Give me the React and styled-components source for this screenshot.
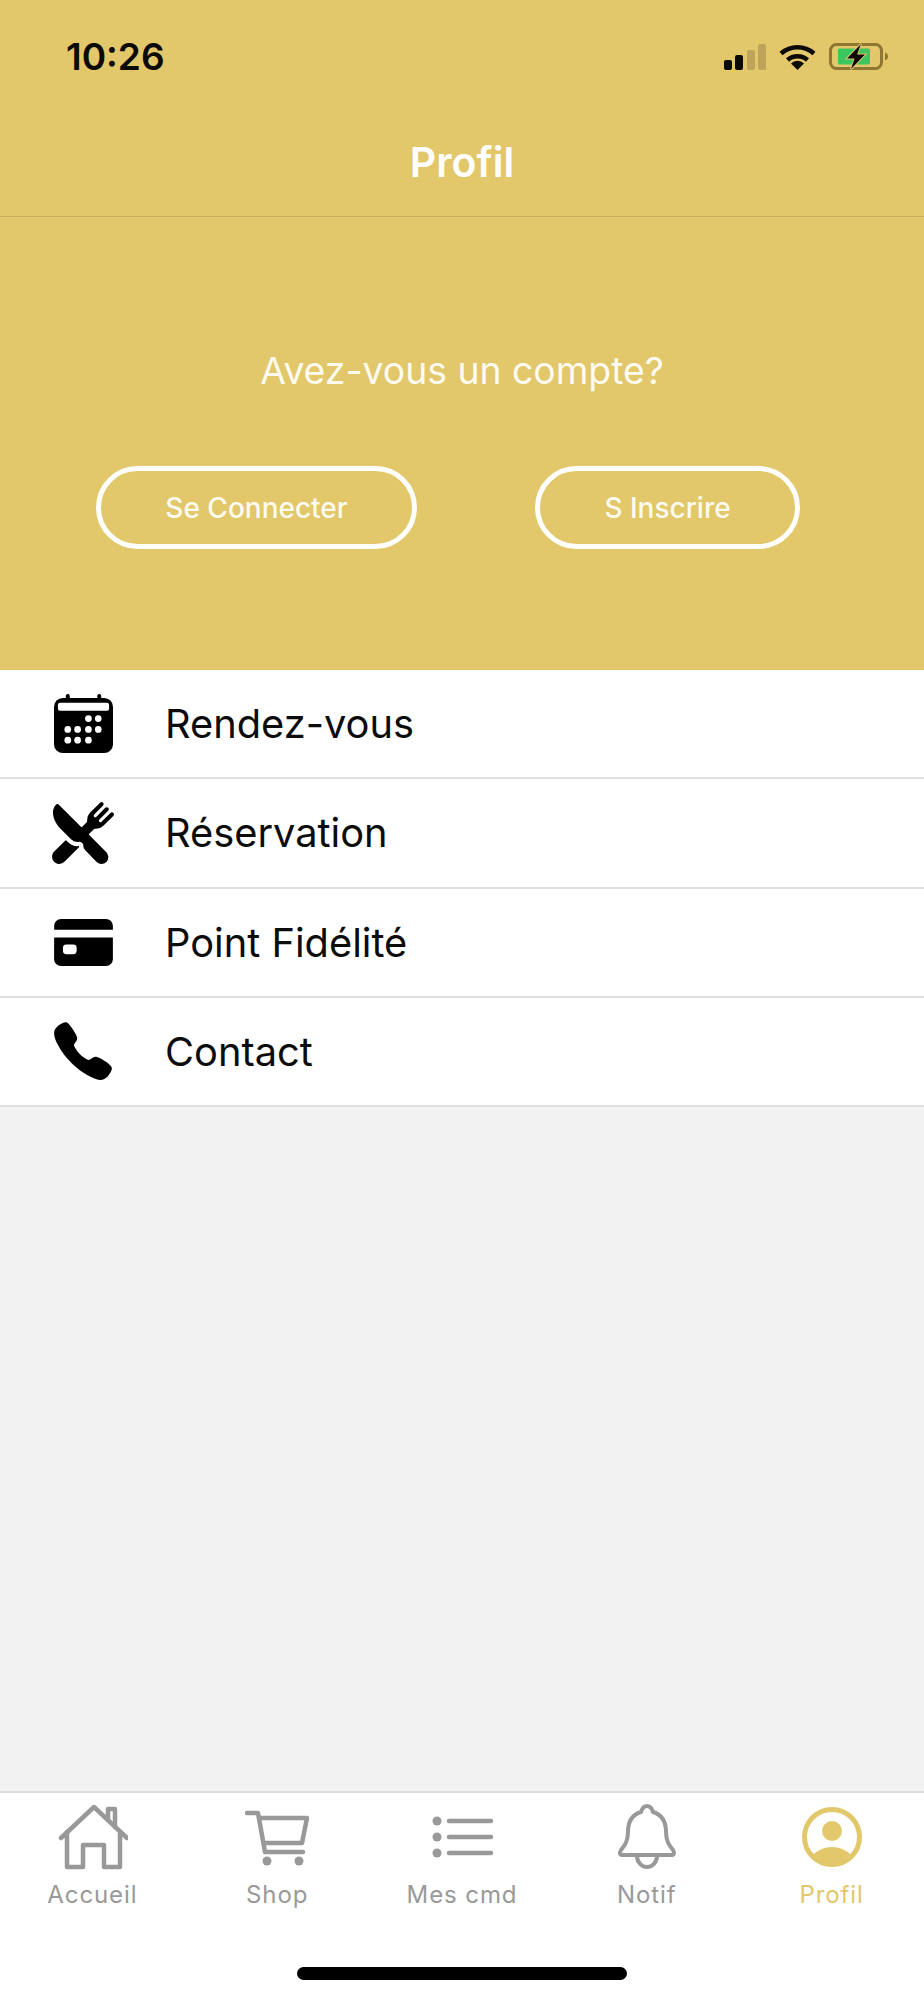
import { createGlobalStyle, styled } from "styled-components";
import { IoCall, IoRestaurant } from "react-icons/io5";

const GOLD = "#e2c76b";

const GlobalStyle = createGlobalStyle`
  html, body {
    margin: 0;
    padding: 0;
    background: #f2f2f2;
    font-family: Inter, "Liberation Sans", sans-serif;
  }
`;

const Page = styled.div`
  width: 924px;
  height: 2000px;
  display: flex;
  flex-direction: column;
  overflow: hidden;
`;

const Header = styled.header`
  background: ${GOLD};
  border-bottom: 1px solid #c6ab5c;
`;

const StatusBar = styled.div`
  height: 90px;
  padding: 23px 35px 0 66px;
  box-sizing: border-box;
  display: flex;
  align-items: center;
  justify-content: space-between;
`;

const Time = styled.span`
  font-size: 37px;
  font-weight: 600;
  color: #0b0a06;
`;

const StatusIcons = styled.div`
  display: flex;
  align-items: center;
  gap: 13px;
`;

const Title = styled.h1`
  margin: 0;
  height: 126px;
  padding-top: 20px;
  box-sizing: border-box;
  line-height: 104px;
  text-align: center;
  font-size: 41px;
  font-weight: 600;
  color: #fff;
`;

const Hero = styled.section`
  background: ${GOLD};
  height: 453px;
  padding-top: 131px;
  box-sizing: border-box;
`;

const Question = styled.p`
  margin: 0 0 72px;
  line-height: 46px;
  text-align: center;
  font-size: 37.3px;
  font-weight: 400;
  color: #fdfbf0;
`;

const Buttons = styled.div`
  display: flex;
  gap: 118px;
  padding-left: 96px;
`;

const OutlineButton = styled.button`
  width: ${(props) => props.$width}px;
  height: 83px;
  border: 5px solid #fff;
  border-radius: 42px;
  background: transparent;
  font-family: inherit;
  font-size: 28px;
  font-weight: 500;
  color: #fdfbf0;
  padding: 0;
`;

const Menu = styled.ul`
  margin: 0;
  padding: 0;
  list-style: none;
  background: #fff;
`;

const MenuRow = styled.li`
  height: 109.25px;
  box-sizing: border-box;
  border-bottom: 2px solid #dfdfdf;
  display: flex;
  align-items: center;
  padding-left: 50px;
`;

const MenuIcon = styled.span`
  width: 66px;
  height: 66px;
  margin-right: 49px;
  display: flex;
  align-items: center;
  justify-content: center;
  color: #000;
`;

const MenuLabel = styled.span`
  font-size: 39.8px;
  color: #0c0c0c;
`;

const Filler = styled.main`
  flex: 1;
  background: #f2f2f2;
`;

const TabBar = styled.footer`
  height: 209px;
  box-sizing: border-box;
  background: #fff;
  border-top: 2px solid #dcdcdc;
  display: flex;
  flex-direction: column;
`;

const Tabs = styled.nav`
  display: grid;
  grid-template-columns: repeat(5, 1fr);
  padding-top: 9px;
`;

const Tab = styled.div`
  display: flex;
  flex-direction: column;
  align-items: center;
  color: ${(props) => (props.$active ? GOLD : "#999")};
`;

const TabIcon = styled.div`
  height: 70px;
  display: flex;
  align-items: center;
  justify-content: center;
`;

const TabLabel = styled.span`
  margin-top: 8px;
  font-size: 24px;
  line-height: 30px;
  letter-spacing: 0.9px;
  font-weight: 400;
`;

const HomeBar = styled.div`
  width: 330px;
  height: 13px;
  margin: auto auto 20px;
  border-radius: 7px;
  background: #000;
`;

function Signal() {
  return (
    <svg width="42" height="26" viewBox="0 0 42 26">
      <rect x="0" y="16" width="8" height="10" rx="2" fill="#0b0a06" />
      <rect x="11" y="11" width="8" height="15" rx="2" fill="#0b0a06" />
      <rect x="23" y="6" width="8" height="20" rx="2" fill="#bda45a" />
      <rect x="34" y="0" width="8" height="26" rx="2" fill="#bda45a" />
    </svg>
  );
}

function Wifi() {
  return (
    <svg width="37" height="26" viewBox="0 0 37 26" fill="none" stroke="#0b0a06">
      <path d="M2 9.5A25 25 0 0 1 35 9.5" strokeWidth="4.5" />
      <path d="M8.5 16A15 15 0 0 1 28.5 16" strokeWidth="4.5" />
      <path d="M18.5 26L12 19.5A9 9 0 0 1 25 19.5Z" fill="#0b0a06" stroke="none" />
    </svg>
  );
}

function Battery() {
  return (
    <svg width="60" height="27" viewBox="0 0 60 27" fill="none">
      <rect x="1.5" y="1.5" width="51" height="24" rx="6" stroke="#8d7733" strokeWidth="3" />
      <path d="M56 9.5c2 .8 3 2.2 3 4s-1 3.2-3 4z" fill="#8d7733" />
      <rect x="9" y="5.5" width="32" height="16" rx="1.5" fill="#3cc65f" />
      <path d="M32 1L18 15.5H25.5L22 26L36 11.5H28Z" fill="#0b0a06" stroke={GOLD} strokeWidth="2" paintOrder="stroke" />
    </svg>
  );
}

function CalendarIcon() {
  const dots = [
    [35, 25], [45, 25],
    [14, 36], [24, 36], [35, 36], [45, 36],
    [14, 47], [24, 47], [35, 47],
  ];
  return (
    <svg width="59" height="59" viewBox="0 0 60 60">
      <rect x="12" y="0" width="4" height="8" rx="2" fill="#000" />
      <rect x="44" y="0" width="4" height="8" rx="2" fill="#000" />
      <rect x="0" y="4" width="60" height="56" rx="9" fill="#000" />
      <rect x="4" y="9" width="52" height="8" rx="2" fill="#fff" />
      {dots.map(([cx, cy]) => (
        <circle key={`${cx}-${cy}`} cx={cx} cy={cy} r="3.4" fill="#fff" />
      ))}
    </svg>
  );
}

function CardIcon() {
  return (
    <svg width="59" height="47" viewBox="0 0 60 48">
      <path d="M0 11V7a7 7 0 0 1 7-7h46a7 7 0 0 1 7 7v4z" fill="#000" />
      <path d="M0 19h60v22a7 7 0 0 1-7 7H7a7 7 0 0 1-7-7z" fill="#000" />
      <rect x="9" y="26" width="14" height="10" rx="3.5" fill="#fff" />
    </svg>
  );
}

function HomeIcon() {
  return (
    <svg width="72" height="66" viewBox="-2 0 72 66" fill="none" stroke="currentColor" strokeWidth="4.5" strokeLinecap="round" strokeLinejoin="round">
      <path d="M3 34L36 3L69 34" />
      <path d="M50 16V5H57V23" />
      <path d="M9 28V63H25V41H46V63H62V28" />
    </svg>
  );
}

function CartIcon() {
  return (
    <svg width="64" height="60" viewBox="0 0 64 60" fill="none" stroke="currentColor" strokeWidth="4.5" strokeLinecap="round" strokeLinejoin="round">
      <path d="M2 6H13L20 45H58" />
      <path d="M15 11H62L57 36H20" />
      <circle cx="22" cy="54" r="4.5" fill="currentColor" stroke="none" />
      <circle cx="54" cy="54" r="4.5" fill="currentColor" stroke="none" />
    </svg>
  );
}

function ListIcon() {
  return (
    <svg width="64" height="50" viewBox="0 0 64 50" fill="none" stroke="currentColor" strokeWidth="4.5" strokeLinecap="round">
      <circle cx="7" cy="9" r="4.5" fill="currentColor" stroke="none" />
      <circle cx="7" cy="25" r="4.5" fill="currentColor" stroke="none" />
      <circle cx="7" cy="41" r="4.5" fill="currentColor" stroke="none" />
      <path d="M19 9H61M19 25H61M19 41H61" />
    </svg>
  );
}

function BellIcon() {
  return (
    <svg width="60" height="68" viewBox="0 0 60 68" fill="none" stroke="currentColor" strokeWidth="4" strokeLinejoin="round">
      <path d="M30 3c-4 0-5 3-6 6C14 12 11 20 11 29c0 9-3 13-7 18-2 3-1 5 2 5h48c3 0 4-2 2-5-4-5-7-9-7-18 0-9-3-17-13-20-1-3-2-6-6-6z" />
      <path d="M20 53a10 11 0 0 0 20 0" />
    </svg>
  );
}

function ProfileIcon() {
  return (
    <svg width="62" height="62" viewBox="0 0 62 62" fill="currentColor">
      <circle cx="31" cy="31" r="27.5" fill="none" stroke="currentColor" strokeWidth="5" />
      <circle cx="31" cy="25" r="10" />
      <path d="M11 50C16 44 24 41 31 41C38 41 46 44 51 50A28 28 0 0 1 11 50Z" />
    </svg>
  );
}

const menu = [
  { label: "Rendez-vous", icon: <CalendarIcon /> },
  { label: "Réservation", icon: <IoRestaurant size={68} /> },
  { label: "Point Fidélité", icon: <CardIcon /> },
  { label: "Contact", icon: <IoCall size={66} /> },
];

const tabs = [
  { label: "Accueil", icon: <HomeIcon /> },
  { label: "Shop", icon: <CartIcon /> },
  { label: "Mes cmd", icon: <ListIcon /> },
  { label: "Notif", icon: <BellIcon /> },
  { label: "Profil", icon: <ProfileIcon />, active: true },
];

export default function App() {
  return (
    <Page>
      <GlobalStyle />
      <Header>
        <StatusBar>
          <Time>10:26</Time>
          <StatusIcons>
            <Signal />
            <Wifi />
            <Battery />
          </StatusIcons>
        </StatusBar>
        <Title>Profil</Title>
      </Header>
      <Hero>
        <Question>Avez-vous un compte?</Question>
        <Buttons>
          <OutlineButton $width={321}>Se Connecter</OutlineButton>
          <OutlineButton $width={265}>S Inscrire</OutlineButton>
        </Buttons>
      </Hero>
      <Menu>
        {menu.map((item) => (
          <MenuRow key={item.label}>
            <MenuIcon>{item.icon}</MenuIcon>
            <MenuLabel>{item.label}</MenuLabel>
          </MenuRow>
        ))}
      </Menu>
      <Filler />
      <TabBar>
        <Tabs>
          {tabs.map((tab) => (
            <Tab key={tab.label} $active={tab.active}>
              <TabIcon>{tab.icon}</TabIcon>
              <TabLabel>{tab.label}</TabLabel>
            </Tab>
          ))}
        </Tabs>
        <HomeBar />
      </TabBar>
    </Page>
  );
}
